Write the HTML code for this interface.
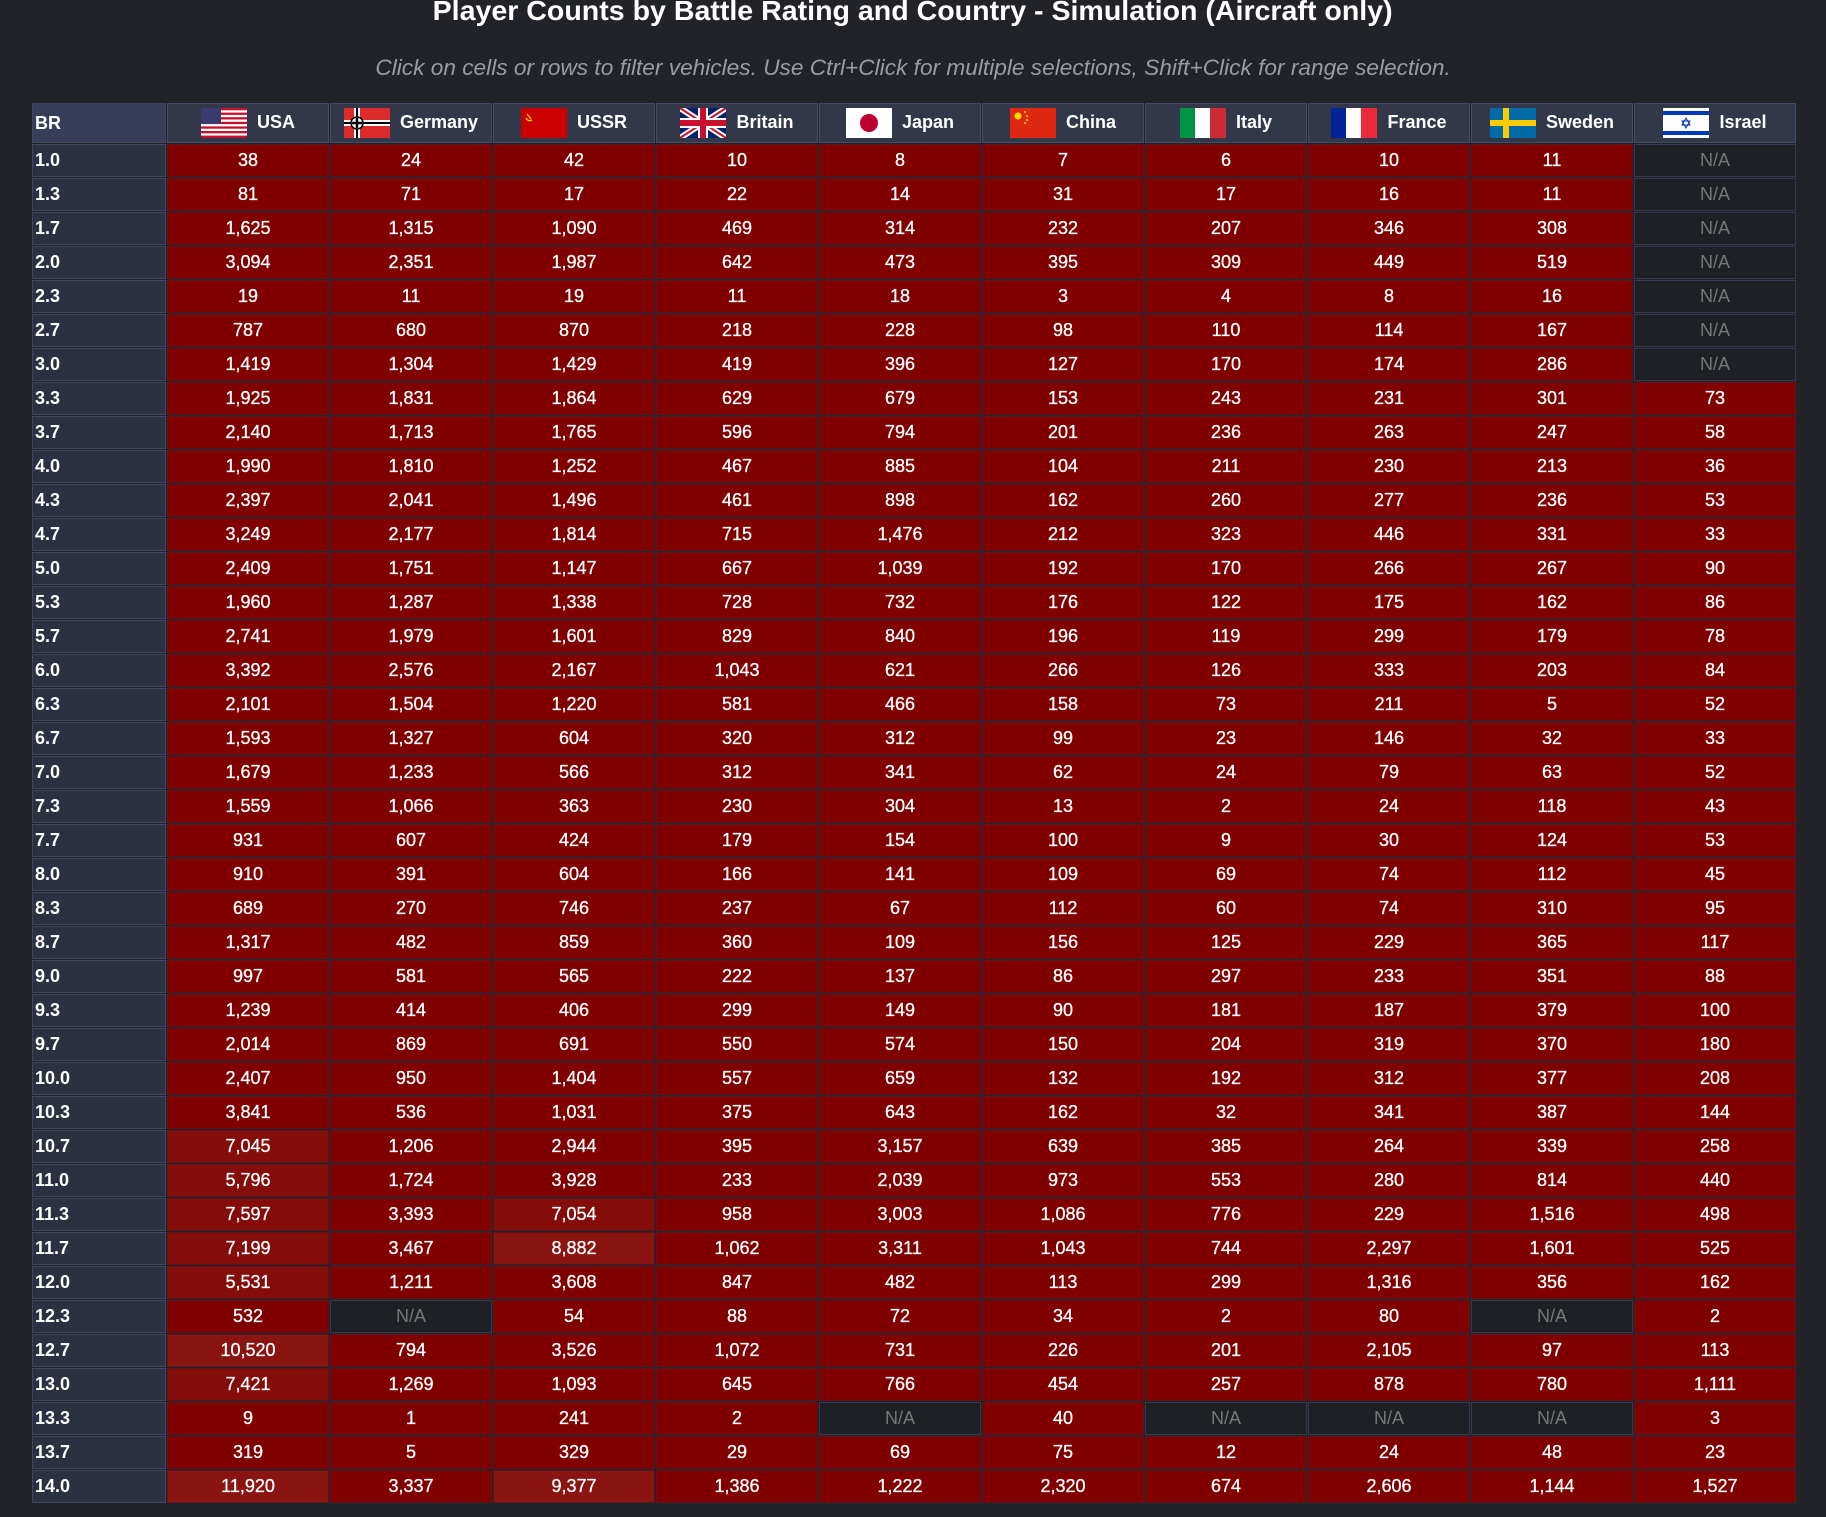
<!DOCTYPE html>
<html><head><meta charset="utf-8">
<style>
body{margin:0;background:#212329;width:1826px;height:1517px;overflow:hidden;font-family:"Liberation Sans",sans-serif;}
.t{position:absolute;left:0;width:1826px;top:-6px;text-align:center;color:#fff;font-weight:bold;font-size:28px;line-height:34px;}
.t span{display:inline-block;transform:scaleX(1.02);}
.s{position:absolute;left:0;width:1826px;top:55px;text-align:center;color:#9a9ca2;font-style:italic;font-size:22px;line-height:26px;}
.s span{display:inline-block;transform:scaleX(1.03);}
table{position:absolute;left:31px;top:102px;width:1766px;table-layout:fixed;border-collapse:separate;border-spacing:1px;}
td,th{box-sizing:border-box;height:33px;border:1px solid #5c1420;background:#800000;color:#fff;text-align:center;font-size:18px;padding:0;-webkit-text-stroke:0.3px #fff;}
th{height:40px;background:#323749;border-color:#454c66;font-weight:bold;font-size:18px;-webkit-text-stroke:0;}
th svg{vertical-align:middle;margin-right:10px;}
td.b,th.b{background:#2c3142;border-color:#3f4760;text-align:left;padding-left:2px;font-weight:bold;-webkit-text-stroke:0;}
th.b{background:#383e5a;}
td.h{background:#850d09;}
td.h2{background:#8a140f;}
td.n{background:#1d2024;border-color:#343a4e;color:#777;-webkit-text-stroke:0;}
</style></head><body>
<div class="t"><span>Player Counts by Battle Rating and Country - Simulation (Aircraft only)</span></div>
<div class="s"><span>Click on cells or rows to filter vehicles. Use Ctrl+Click for multiple selections, Shift+Click for range selection.</span></div>
<table>
<colgroup><col style="width:134px"><col span="10"></colgroup>
<tr><th class="b">BR</th>
<th><svg width="46" height="30" viewBox="0 0 46 30"><rect width="46" height="30" fill="#fff"/><g fill="#c8102e"><rect y="0" width="46" height="2.3"/><rect y="4.6" width="46" height="2.3"/><rect y="9.2" width="46" height="2.3"/><rect y="13.8" width="46" height="2.3"/><rect y="18.4" width="46" height="2.3"/><rect y="23" width="46" height="2.3"/><rect y="27.6" width="46" height="2.4"/></g><rect width="20" height="16" fill="#3c3b6e"/></svg>USA</th>
<th><svg width="46" height="30" viewBox="0 0 46 30"><rect width="46" height="30" fill="#dd2a2a"/><rect x="10" width="6" height="30" fill="#fff"/><rect y="12" width="46" height="6" fill="#fff"/><rect x="12" width="2" height="30" fill="#000"/><rect y="14" width="46" height="2" fill="#000"/><circle cx="13" cy="15" r="6" fill="#fff" stroke="#000" stroke-width="1.5"/><path d="M13 10v10M8 15h10" stroke="#000" stroke-width="2.5"/></svg>Germany</th>
<th><svg width="46" height="30" viewBox="0 0 46 30"><rect width="46" height="30" fill="#cc0000"/><path d="M5 10q2 4 6 2M6 6l4 5" stroke="#ffd700" stroke-width="1.3" fill="none"/></svg>USSR</th>
<th><svg width="46" height="30" viewBox="0 0 46 30"><rect width="46" height="30" fill="#012169"/><path d="M0 0L46 30M46 0L0 30" stroke="#fff" stroke-width="6"/><path d="M0 0L46 30M46 0L0 30" stroke="#c8102e" stroke-width="2"/><path d="M23 0v30M0 15h46" stroke="#fff" stroke-width="10"/><path d="M23 0v30M0 15h46" stroke="#c8102e" stroke-width="6"/></svg>Britain</th>
<th><svg width="46" height="30" viewBox="0 0 46 30"><rect width="46" height="30" fill="#fff"/><circle cx="23" cy="15" r="9" fill="#bc002d"/></svg>Japan</th>
<th><svg width="46" height="30" viewBox="0 0 46 30"><rect width="46" height="30" fill="#de2910"/><circle cx="8" cy="8" r="3.5" fill="#ffde00"/><circle cx="15" cy="4" r="1" fill="#ffde00"/><circle cx="17" cy="8" r="1" fill="#ffde00"/><circle cx="17" cy="12" r="1" fill="#ffde00"/><circle cx="15" cy="15" r="1" fill="#ffde00"/></svg>China</th>
<th><svg width="46" height="30" viewBox="0 0 46 30"><rect width="16" height="30" fill="#009246"/><rect x="15" width="16" height="30" fill="#fff"/><rect x="30" width="16" height="30" fill="#ce2b37"/></svg>Italy</th>
<th><svg width="46" height="30" viewBox="0 0 46 30"><rect width="16" height="30" fill="#002395"/><rect x="15" width="16" height="30" fill="#fff"/><rect x="30" width="16" height="30" fill="#ed2939"/></svg>France</th>
<th><svg width="46" height="30" viewBox="0 0 46 30"><rect width="46" height="30" fill="#006aa7"/><rect x="13" width="6" height="30" fill="#fecc00"/><rect y="12" width="46" height="6" fill="#fecc00"/></svg>Sweden</th>
<th><svg width="46" height="30" viewBox="0 0 46 30"><rect width="46" height="30" fill="#fff"/><rect y="3" width="46" height="4" fill="#0038b8"/><rect y="23" width="46" height="4" fill="#0038b8"/><path d="M23 10l4 7h-8zM23 20l4-7h-8z" fill="none" stroke="#0038b8" stroke-width="1"/></svg>Israel</th></tr>
<tr><td class="b">1.0</td><td>38</td><td>24</td><td>42</td><td>10</td><td>8</td><td>7</td><td>6</td><td>10</td><td>11</td><td class="n">N/A</td></tr>
<tr><td class="b">1.3</td><td>81</td><td>71</td><td>17</td><td>22</td><td>14</td><td>31</td><td>17</td><td>16</td><td>11</td><td class="n">N/A</td></tr>
<tr><td class="b">1.7</td><td>1,625</td><td>1,315</td><td>1,090</td><td>469</td><td>314</td><td>232</td><td>207</td><td>346</td><td>308</td><td class="n">N/A</td></tr>
<tr><td class="b">2.0</td><td>3,094</td><td>2,351</td><td>1,987</td><td>642</td><td>473</td><td>395</td><td>309</td><td>449</td><td>519</td><td class="n">N/A</td></tr>
<tr><td class="b">2.3</td><td>19</td><td>11</td><td>19</td><td>11</td><td>18</td><td>3</td><td>4</td><td>8</td><td>16</td><td class="n">N/A</td></tr>
<tr><td class="b">2.7</td><td>787</td><td>680</td><td>870</td><td>218</td><td>228</td><td>98</td><td>110</td><td>114</td><td>167</td><td class="n">N/A</td></tr>
<tr><td class="b">3.0</td><td>1,419</td><td>1,304</td><td>1,429</td><td>419</td><td>396</td><td>127</td><td>170</td><td>174</td><td>286</td><td class="n">N/A</td></tr>
<tr><td class="b">3.3</td><td>1,925</td><td>1,831</td><td>1,864</td><td>629</td><td>679</td><td>153</td><td>243</td><td>231</td><td>301</td><td>73</td></tr>
<tr><td class="b">3.7</td><td>2,140</td><td>1,713</td><td>1,765</td><td>596</td><td>794</td><td>201</td><td>236</td><td>263</td><td>247</td><td>58</td></tr>
<tr><td class="b">4.0</td><td>1,990</td><td>1,810</td><td>1,252</td><td>467</td><td>885</td><td>104</td><td>211</td><td>230</td><td>213</td><td>36</td></tr>
<tr><td class="b">4.3</td><td>2,397</td><td>2,041</td><td>1,496</td><td>461</td><td>898</td><td>162</td><td>260</td><td>277</td><td>236</td><td>53</td></tr>
<tr><td class="b">4.7</td><td>3,249</td><td>2,177</td><td>1,814</td><td>715</td><td>1,476</td><td>212</td><td>323</td><td>446</td><td>331</td><td>33</td></tr>
<tr><td class="b">5.0</td><td>2,409</td><td>1,751</td><td>1,147</td><td>667</td><td>1,039</td><td>192</td><td>170</td><td>266</td><td>267</td><td>90</td></tr>
<tr><td class="b">5.3</td><td>1,960</td><td>1,287</td><td>1,338</td><td>728</td><td>732</td><td>176</td><td>122</td><td>175</td><td>162</td><td>86</td></tr>
<tr><td class="b">5.7</td><td>2,741</td><td>1,979</td><td>1,601</td><td>829</td><td>840</td><td>196</td><td>119</td><td>299</td><td>179</td><td>78</td></tr>
<tr><td class="b">6.0</td><td>3,392</td><td>2,576</td><td>2,167</td><td>1,043</td><td>621</td><td>266</td><td>126</td><td>333</td><td>203</td><td>84</td></tr>
<tr><td class="b">6.3</td><td>2,101</td><td>1,504</td><td>1,220</td><td>581</td><td>466</td><td>158</td><td>73</td><td>211</td><td>5</td><td>52</td></tr>
<tr><td class="b">6.7</td><td>1,593</td><td>1,327</td><td>604</td><td>320</td><td>312</td><td>99</td><td>23</td><td>146</td><td>32</td><td>33</td></tr>
<tr><td class="b">7.0</td><td>1,679</td><td>1,233</td><td>566</td><td>312</td><td>341</td><td>62</td><td>24</td><td>79</td><td>63</td><td>52</td></tr>
<tr><td class="b">7.3</td><td>1,559</td><td>1,066</td><td>363</td><td>230</td><td>304</td><td>13</td><td>2</td><td>24</td><td>118</td><td>43</td></tr>
<tr><td class="b">7.7</td><td>931</td><td>607</td><td>424</td><td>179</td><td>154</td><td>100</td><td>9</td><td>30</td><td>124</td><td>53</td></tr>
<tr><td class="b">8.0</td><td>910</td><td>391</td><td>604</td><td>166</td><td>141</td><td>109</td><td>69</td><td>74</td><td>112</td><td>45</td></tr>
<tr><td class="b">8.3</td><td>689</td><td>270</td><td>746</td><td>237</td><td>67</td><td>112</td><td>60</td><td>74</td><td>310</td><td>95</td></tr>
<tr><td class="b">8.7</td><td>1,317</td><td>482</td><td>859</td><td>360</td><td>109</td><td>156</td><td>125</td><td>229</td><td>365</td><td>117</td></tr>
<tr><td class="b">9.0</td><td>997</td><td>581</td><td>565</td><td>222</td><td>137</td><td>86</td><td>297</td><td>233</td><td>351</td><td>88</td></tr>
<tr><td class="b">9.3</td><td>1,239</td><td>414</td><td>406</td><td>299</td><td>149</td><td>90</td><td>181</td><td>187</td><td>379</td><td>100</td></tr>
<tr><td class="b">9.7</td><td>2,014</td><td>869</td><td>691</td><td>550</td><td>574</td><td>150</td><td>204</td><td>319</td><td>370</td><td>180</td></tr>
<tr><td class="b">10.0</td><td>2,407</td><td>950</td><td>1,404</td><td>557</td><td>659</td><td>132</td><td>192</td><td>312</td><td>377</td><td>208</td></tr>
<tr><td class="b">10.3</td><td>3,841</td><td>536</td><td>1,031</td><td>375</td><td>643</td><td>162</td><td>32</td><td>341</td><td>387</td><td>144</td></tr>
<tr><td class="b">10.7</td><td class="h">7,045</td><td>1,206</td><td>2,944</td><td>395</td><td>3,157</td><td>639</td><td>385</td><td>264</td><td>339</td><td>258</td></tr>
<tr><td class="b">11.0</td><td class="h">5,796</td><td>1,724</td><td>3,928</td><td>233</td><td>2,039</td><td>973</td><td>553</td><td>280</td><td>814</td><td>440</td></tr>
<tr><td class="b">11.3</td><td class="h">7,597</td><td>3,393</td><td class="h">7,054</td><td>958</td><td>3,003</td><td>1,086</td><td>776</td><td>229</td><td>1,516</td><td>498</td></tr>
<tr><td class="b">11.7</td><td class="h">7,199</td><td>3,467</td><td class="h2">8,882</td><td>1,062</td><td>3,311</td><td>1,043</td><td>744</td><td>2,297</td><td>1,601</td><td>525</td></tr>
<tr><td class="b">12.0</td><td class="h">5,531</td><td>1,211</td><td>3,608</td><td>847</td><td>482</td><td>113</td><td>299</td><td>1,316</td><td>356</td><td>162</td></tr>
<tr><td class="b">12.3</td><td>532</td><td class="n">N/A</td><td>54</td><td>88</td><td>72</td><td>34</td><td>2</td><td>80</td><td class="n">N/A</td><td>2</td></tr>
<tr><td class="b">12.7</td><td class="h2">10,520</td><td>794</td><td>3,526</td><td>1,072</td><td>731</td><td>226</td><td>201</td><td>2,105</td><td>97</td><td>113</td></tr>
<tr><td class="b">13.0</td><td class="h">7,421</td><td>1,269</td><td>1,093</td><td>645</td><td>766</td><td>454</td><td>257</td><td>878</td><td>780</td><td>1,111</td></tr>
<tr><td class="b">13.3</td><td>9</td><td>1</td><td>241</td><td>2</td><td class="n">N/A</td><td>40</td><td class="n">N/A</td><td class="n">N/A</td><td class="n">N/A</td><td>3</td></tr>
<tr><td class="b">13.7</td><td>319</td><td>5</td><td>329</td><td>29</td><td>69</td><td>75</td><td>12</td><td>24</td><td>48</td><td>23</td></tr>
<tr><td class="b">14.0</td><td class="h2">11,920</td><td>3,337</td><td class="h2">9,377</td><td>1,386</td><td>1,222</td><td>2,320</td><td>674</td><td>2,606</td><td>1,144</td><td>1,527</td></tr>
</table>
</body></html>
